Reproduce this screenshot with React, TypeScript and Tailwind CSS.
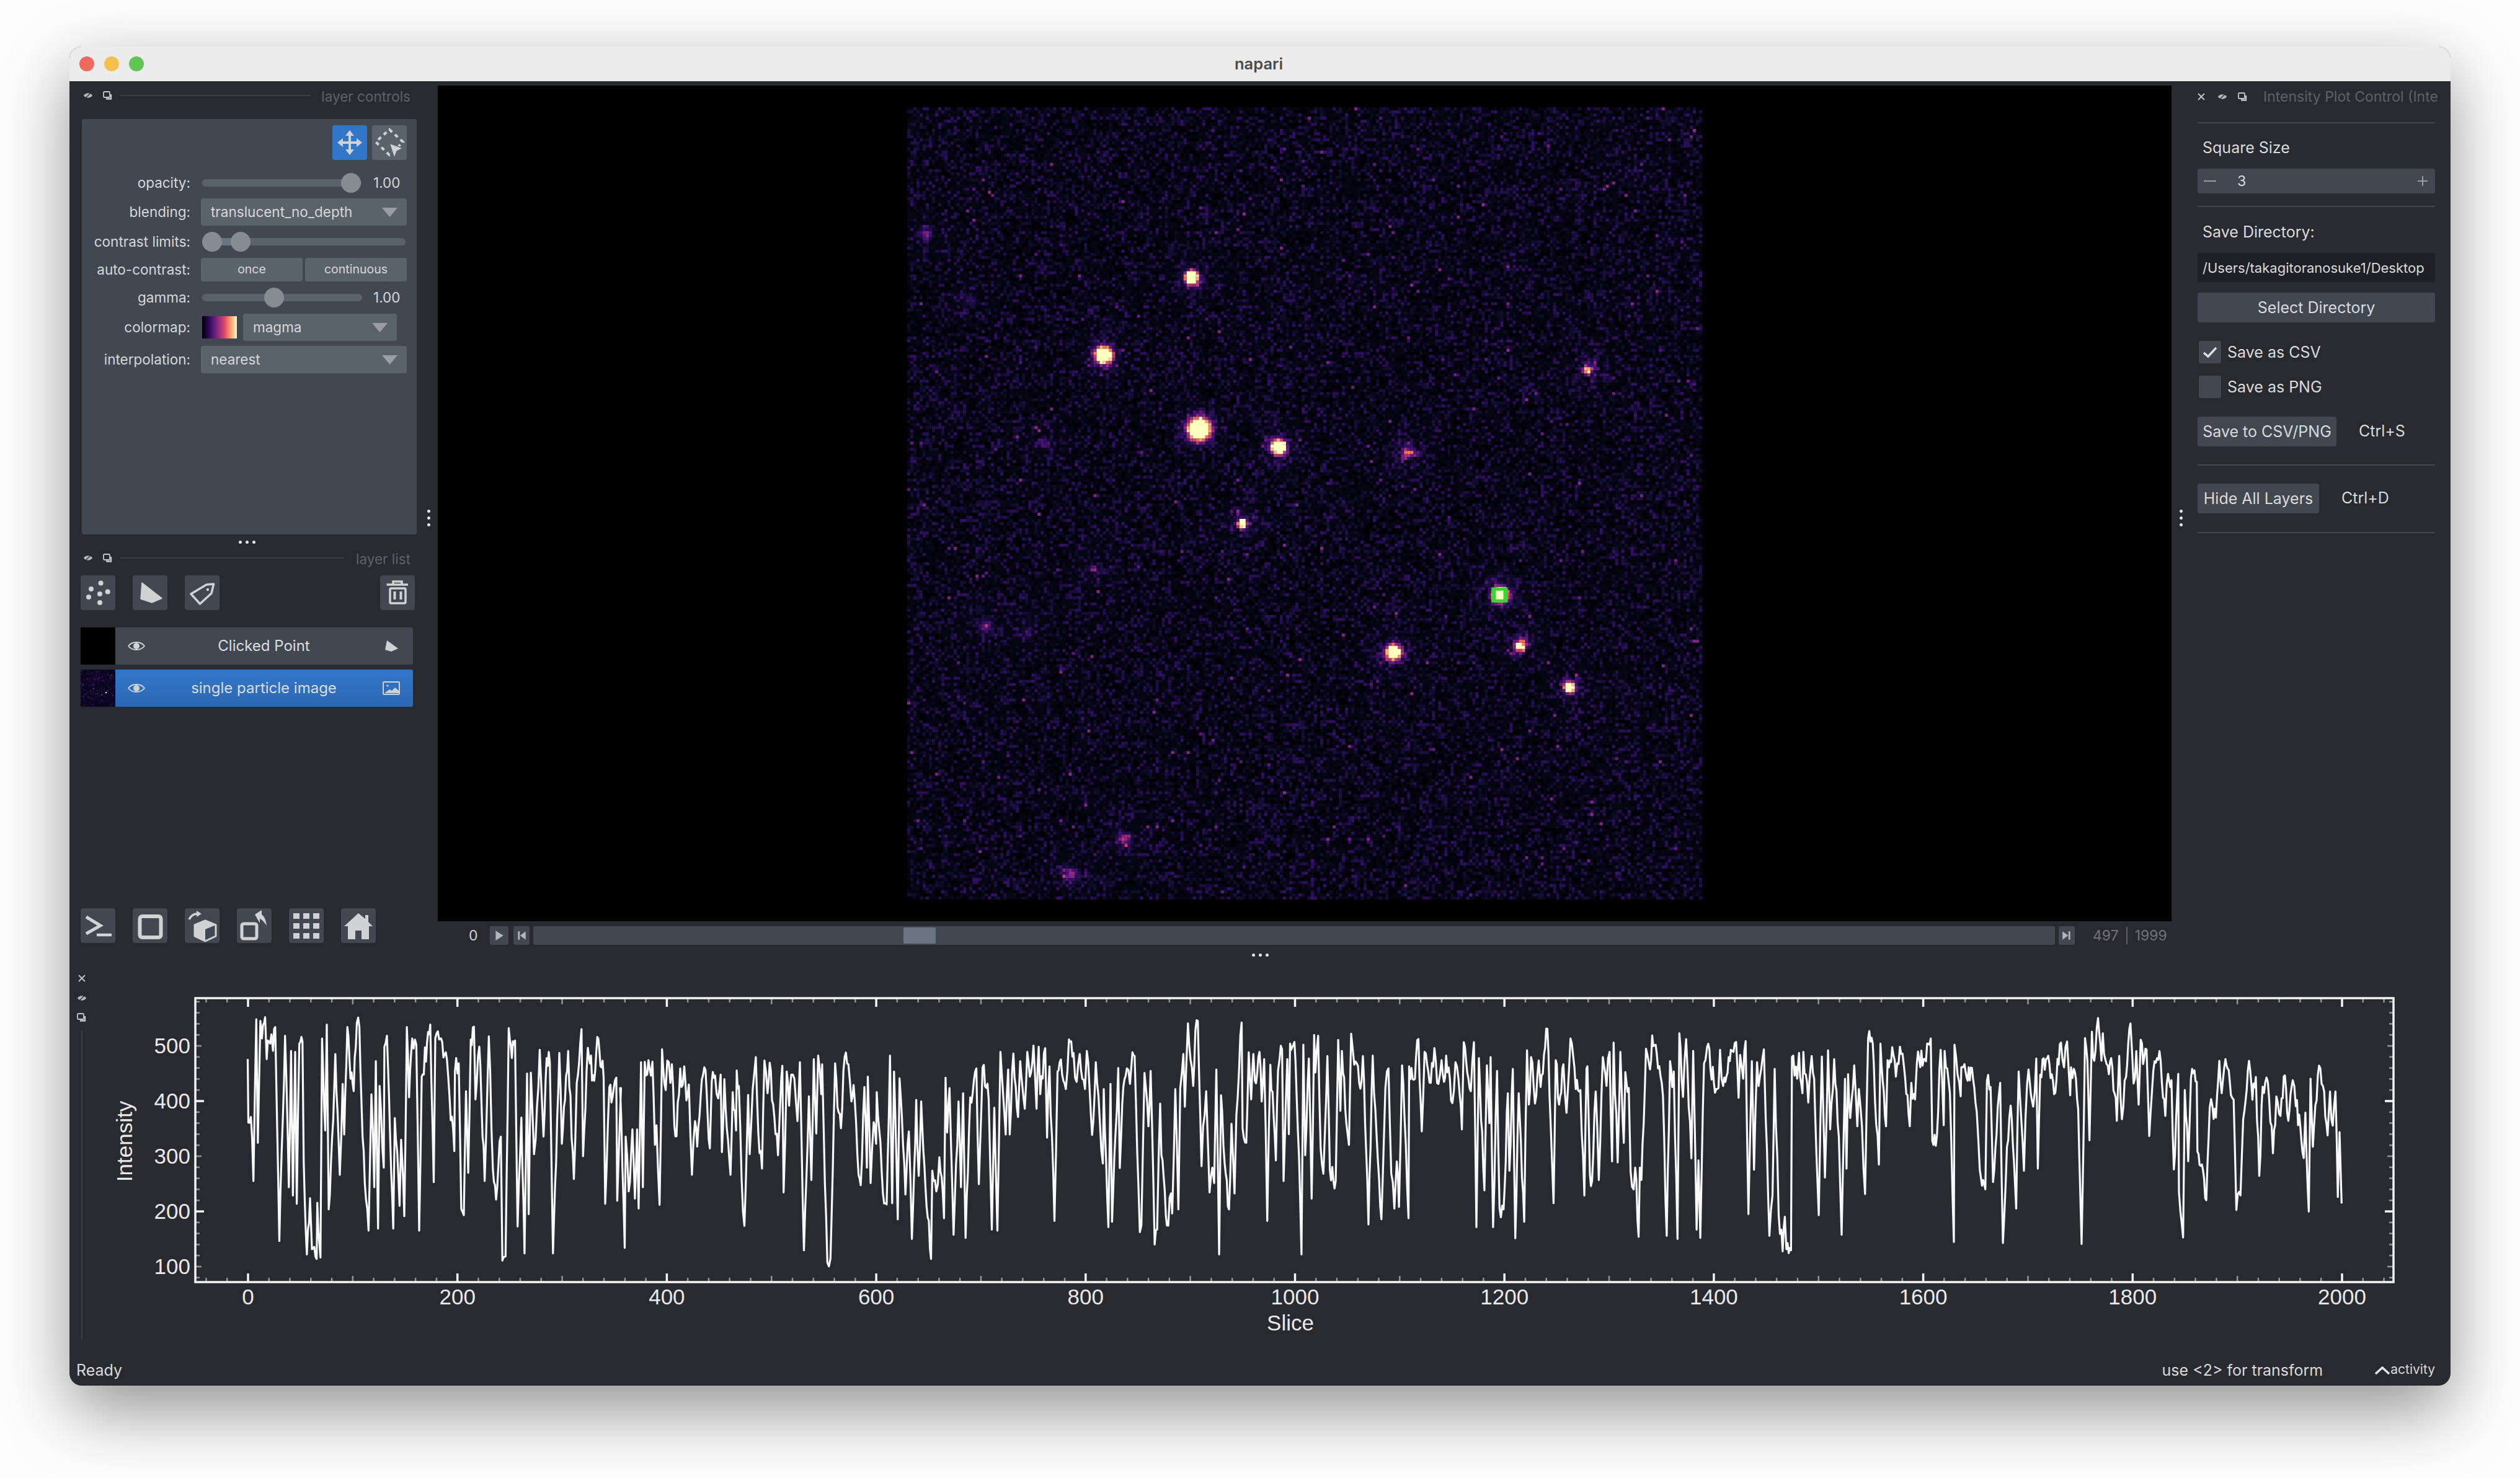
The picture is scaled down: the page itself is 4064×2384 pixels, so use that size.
import type { ReactNode } from "react";

// magma stops, t = index / 10
const magma = [
  [0, 0, 4], [20, 14, 54], [59, 15, 112], [100, 26, 128], [140, 41, 129], [183, 55, 121],
  [222, 73, 104], [247, 112, 92], [254, 159, 109], [254, 207, 146], [252, 253, 191],
];

function magmaAt(v: number) {
  const t = Math.min(Math.max(v, 0), 1) * 10;
  const i = Math.min(Math.floor(t), 9);
  const f = t - i;
  const c = magma[i].map((n, k) => Math.round(n + (magma[i + 1][k] - n) * f));
  return `rgb(${c[0]},${c[1]},${c[2]})`;
}

function rng(seed: number) {
  let s = seed;
  return () => {
    s = (s * 1664525 + 1013904223) >>> 0;
    return (((s >>> 8) ^ s) >>> 0) % 100000 / 100000;
  };
}

// [zoom x, zoom y, core sigma, amp, halo]
const spots = [
  [553, 345, 1.2, 3, 0.2], [382, 496, 1.5, 3, 0.24], [568, 640, 2.0, 3, 0.28], [722, 675, 1.3, 3, 0.22],
  [652, 824, 0.8, 2.4, 0.2], [972, 687, 1.0, 0.62, 0.24], [1322, 526, 0.9, 0.85, 0.22], [1152, 963, 1.4, 3, 0.26],
  [945, 1075, 1.3, 3, 0.22], [1190, 1063, 1.1, 1.2, 0.28], [1287, 1143, 1.0, 2.4, 0.2], [36, 260, 1.1, 0.26, 0.06],
  [122, 388, 1.1, 0.14, 0.04], [265, 667, 1.0, 0.18, 0.04], [363, 913, 0.6, 0.55, 0.08], [153, 1025, 1.3, 0.28, 0.06],
  [422, 1438, 1.2, 0.38, 0.12], [318, 1508, 1.4, 0.32, 0.08], [233, 1035, 1.5, 0.08, 0.03],
];

function buildImage() {
  const r = rng(7321);
  const levels: string[] = Array.from({ length: 41 }, () => "");
  for (let y = 0; y < 256; y++) {
    for (let x = 0; x < 256; x++) {
      const a = r();
      let v = 0.012 + 0.17 * Math.pow(a, 3.4);
      if (r() > 0.996) v = 0.22 + r() * 0.18;
      for (const [zx, zy, sig, amp, halo] of spots) {
        const px = (zx / 1.206 - 3) / 5;
        const py = (zy / 1.206 - 12) / 5 - 0.3;
        const d = (px - x) * (px - x) + (py - y) * (py - y);
        if (d > 120) continue;
        v += amp * Math.exp(-d / (2 * sig * sig));
        v += halo * r() * r() * 2 * Math.exp(-d / (2 * 10 * (sig > 1.2 ? 1.4 : 1)));
      }
      const l = Math.min(40, Math.round(v * 40));
      if (l > 0) levels[l] += `M${x} ${y}h1v1h-1z`;
    }
  }
  return levels;
}

const imageLevels = buildImage();

function ParticleImage() {
  return (
    <svg viewBox="0 0 256 256" preserveAspectRatio="none" className="h-[1278px] w-[1282px] blur-[0.5px]">
      <rect width="256" height="256" fill="#000004" />
      {imageLevels.map((d, i) => (d ? <path key={i} d={d} fill={magmaAt(i / 40)} /> : null))}
      <rect x="188.2" y="155.2" width="5.2" height="4.8" fill="#3ed332" />
      <rect x="189.6" y="156.2" width="2.4" height="2.8" fill="#fbf9c4" />
    </svg>
  );
}

function Thumbnail() {
  const r = rng(91);
  const cells: ReactNode[] = [];
  for (let i = 0; i < 170; i++) {
    cells.push(
      <rect key={i} x={Math.floor(r() * 56)} y={Math.floor(r() * 60)} width="1.4" height="1.4" fill={i % 9 === 0 ? "#8c2981" : "#3b0f70"} />
    );
  }
  return (
    <svg viewBox="0 0 56 60" className="h-[60px] w-[56px] shrink-0">
      <rect width="56" height="60" fill="#0a0620" />
      {cells}
      <rect x="40" y="36" width="2" height="2" fill="#fcfdbf" />
      <rect x="20" y="30" width="1.6" height="1.6" fill="#de4968" />
      <rect x="33" y="40" width="1.6" height="1.6" fill="#de4968" />
    </svg>
  );
}

// traced trace of the intensity curve: [zoom origin, x scale, y origin, y scale, points]
const traced: [number, number, number, number, number[]][] = [
  [300, 1.96, 1600, 3, [195,325,197,632,205,605,213,915,222,132,227,730,235,140,240,225,250,122,255,325,262,240,270,205,275,285,282,170,295,1205,313,212,325,945,332,285,338,985,345,290,350,1025,358,250,368,240,372,820,382,1270,392,998,398,1245,413,1292,415,1020,425,1285,430,225,440,670,445,158,451,1052,462,700,472,300,486,885,495,445,500,690,510,170,520,420,530,480,540,150,548,170,558,700,565,925,577,1155,586,495,595,945,600,335,607,1145,612,455,625,850,627,265,635,212,655,1145,660,610,675,1035,680,715,690,1085,698,170,705,510,715,225,728,255,737,1155,745,410,772,158,783,920,788,225,800,230,806,225,825,330,833,510,848,770,850,385,862,345,870,1050,878,1080,885,480,892,875,900,230,910,168,915,520,927,265,944,915,957,215,970,860,980,1005,995,700,1000,1300,1010,1280,1020,175,1030,320,1040,235,1048,1135,1060,608,1070,1265,1078,395,1083,1075,1090,390,1100,785,1105,715,1118,280,1130,700,1140,320,1150,340,1160,1265,1180,295,1188,735,1208,285,1226,905,1235,440,1250,180,1255,795,1270,270,1290,430,1300,218,1320,415,1325,1025,1338,460,1348,510,1360,415,1363,1010,1375,465]],
  [1000, 2.01, 1620, 3, [0,405,15,1178,18,640,28,905,40,605,48,940,55,605,60,988,68,280,74,885,80,278,88,340,92,270,100,345,105,278,113,680,118,585,128,970,136,217,148,415,153,272,163,380,168,290,176,590,183,638,195,310,203,390,208,300,215,465,223,388,233,825,243,565,250,688,265,365,277,318,291,697,297,375,308,345,318,455,326,340,330,715,338,362,358,825,365,425,376,610,378,320,385,395,394,845,403,1072,415,438,420,725,430,410,435,335,440,255,448,620,460,795,468,272,478,430,485,282,500,545,512,730,526,297,530,910,540,325,548,490,555,340,565,360,575,565,583,280,596,1190,612,445,620,850,628,265,636,625,642,248,652,435,655,290,660,605,672,1250,682,1230,697,285,705,500,716,600,728,255,740,290,750,470,757,390,773,825,780,875,792,400,800,790,803,350,812,865,822,570,830,675,832,425,852,915,864,968,875,248,882,962,888,325,900,1040,906,358,925,920,936,615,946,1135,960,462,968,830,976,470,990,885,1008,1232,1012,805,1025,905,1035,740,1050,1035,1055,355,1060,620,1068,405,1081,1115,1097,470,1105,885,1112,430,1120,1130,1135,450,1155,310,1163,870,1175,305,1195,460,1205,1090,1213,500,1223,1095,1233,230,1250,630,1258,315,1263,630,1275,238,1290,545,1297,275,1312,505,1320,230,1328,350,1340,200,1350,505,1357,205,1362,435,1378,212,1384,645,1392,300,1408,1048,1418,325,1425,280,1445,410,1455,170,1470,235,1480,375,1490,240,1507,410,1513,225,1530,632,1542,280,1555,560,1565,770]],
  [1780, 2.01, 1620, 3, [0,410,15,1078,22,385,27,1052,38,630,47,308,52,792,60,480,75,310,85,385,93,232,100,250,117,1102,122,1070,132,332,145,590,152,322,165,1162,173,1090,183,480,187,730,205,1070,218,915,222,1012,232,410,242,992,248,405,258,240,263,495,273,92,290,395,297,125,305,80,317,783,322,590,332,420,343,910,352,790,358,865,365,315,374,1210,380,440,392,770,406,992,414,578,424,915,430,535,447,88,450,600,462,670,470,232,478,460,485,240,490,370,505,230,512,470,520,265,530,1048,540,292,558,755,565,320,570,265,578,218,583,855,595,265,600,628,604,190,618,182,633,735,641,1210,647,195,653,730,665,262,674,940,682,148,686,330,695,152,703,695,712,820,725,250,733,800,752,855,760,172,767,515,772,225,790,620,795,680,802,142,808,232,820,285,832,408,840,250,858,1065,872,248,885,650,900,1040,913,405,923,310,932,820,942,988,950,760,957,980,967,295,975,550,988,1035,990,300,1005,365,1020,168,1031,615,1040,230,1060,380,1072,212,1085,385,1095,270,1103,375,1110,248,1130,478,1140,280,1150,360,1161,605,1167,183,1190,420,1200,183,1208,1078,1216,260,1234,900,1242,295,1250,575,1254,255,1262,1078,1275,322,1283,985,1296,992,1310,430,1315,805,1326,312,1334,1132,1345,430,1363,1052,1372,222,1378,485,1385,255,1398,480,1410,272,1416,400,1438,118,1445,440,1458,962,1465,270,1476,485,1490,290,1500,525,1513,165,1530,410,1545,415,1558,925,1565,310]],
  [2560, 2.01, 1620, 3, [0,300,8,820,15,855,27,422,37,850,50,255,62,395,72,230,80,760,85,185,98,765,107,230,118,670,123,328,134,405,140,810,150,895,155,790,166,1125,170,790,175,850,190,215,203,315,210,150,225,240,245,445,257,1120,268,275,275,400,280,325,292,1135,298,140,310,448,320,168,337,745,343,225,354,1090,360,755,366,1130,378,285,388,208,410,380,425,405,430,220,440,395,465,220,482,182,490,452,495,245,505,360,513,178,522,1015,533,275,540,800,550,280,555,395,572,218,578,555,590,1120,600,925,607,312,620,1020,633,1195,640,1028,645,1185,660,1190,663,255,680,360,686,235,697,430,700,230,716,475,727,250,735,360,750,1020,760,252,770,838,780,222,787,605,800,265,815,640,824,1115,835,360,840,795,845,338,852,550,865,295,875,590,880,410,890,590,900,918,910,165,925,190,932,460,945,775,950,190,968,590,973,270,992,245,1000,350,1013,205,1030,355,1045,590,1050,380,1062,460,1068,285,1090,265,1105,190,1113,165,1118,660,1133,635,1145,220,1155,585,1158,225,1175,430,1188,1150,1190,195,1200,340,1210,445,1212,305,1250,360,1262,520,1272,800,1290,895,1295,370,1307,400,1315,860,1330,500,1338,380,1347,1155,1360,690,1372,490,1390,988,1398,325,1415,805,1425,390,1430,315,1445,495,1455,262,1460,795,1468,340,1490,262,1513,435,1535,185,1545,305,1555,180,1565,440]],
  [3200, 1.815, 1460, 1.912, [254,500,262,505,275,630,285,1045,295,410,302,480,308,725,315,390,322,480,333,348,343,480,347,395,358,490,375,500,388,665,395,465,403,660,415,530,428,365,437,550,445,450,452,615,458,415,465,490,475,445,483,712,495,510,513,450,530,650,538,520,548,540,555,815,568,520,570,885,582,1025,587,570,597,790,605,535,622,545,624,760,640,815,650,910,660,625,668,620,678,655,688,480,695,580,706,475,722,585,730,600,738,940,750,895,758,660,775,480,785,600,795,530,805,835,815,560,830,545,845,765,855,590,867,650,880,525,890,665,903,540,912,620,925,680,935,780,940,640,950,945,955,535,962,745,980,495,995,575,1005,710,1012,575,1020,680,1028,575,1035,900,1040,700,1046,920]],
];

function tracePoints() {
  const r = rng(4242);
  const out: string[] = [];
  let prev: [number, number] | null = null;
  for (const [x0, sx, y0, sy, pts] of traced) {
    for (let i = 0; i < pts.length; i += 2) {
      const x = x0 + pts[i] / sx;
      const y = y0 + pts[i + 1] / sy;
      if (prev) {
        // the source has a sample every 1.7px, fill the gaps with some chatter
        const steps = Math.floor((x - prev[0]) / 1.7);
        for (let k = 1; k < steps; k++) {
          const f = k / steps;
          const my = prev[1] + (y - prev[1]) * f + (r() - 0.5) * 36;
          out.push(`${(prev[0] + (x - prev[0]) * f).toFixed(1)},${my.toFixed(1)}`);
        }
      }
      out.push(`${x.toFixed(1)},${y.toFixed(1)}`);
      prev = [x, y];
    }
  }
  return out.join(" ");
}

const sx = (s: number) => 400 + 1.6885 * s;
const vy = (v: number) => 1776 - 0.89 * (v - 400);
const xMinor = Array.from({ length: 105 }, (_, i) => -40 + i * 20).filter((s) => sx(s) < 3856);
const yMinor = Array.from({ length: 26 }, (_, i) => 80 + i * 20);
const tickText = "fill-[#e9e9ea] text-[35px] [font-family:'Liberation_Sans',Arial,sans-serif]";

function IntensityPlot() {
  return (
    <svg viewBox="152 1550 3800 640" className="h-[640px] w-[3800px]">
      {xMinor.map((s) => {
        const major = s % 200 === 0;
        const mid = s % 100 === 0;
        const len = major ? 14 : mid ? 10 : 7;
        const stroke = major ? "#f4f4f4" : "#8f9195";
        const w = major ? 3.5 : 2.6;
        return (
          <g key={s} stroke={stroke} strokeWidth={w}>
            <line x1={sx(s)} x2={sx(s)} y1={1610} y2={1610 + len} />
            <line x1={sx(s)} x2={sx(s)} y1={2068} y2={2068 - len} />
          </g>
        );
      })}
      {yMinor.map((v) => {
        const major = v % 200 === 0;
        const mid = v % 100 === 0;
        const len = major ? 14 : mid ? 10 : 7;
        const stroke = major ? "#f4f4f4" : "#8f9195";
        const w = major ? 3.5 : 2.6;
        return (
          <g key={v} stroke={stroke} strokeWidth={w}>
            <line x1={315} x2={315 + len} y1={vy(v)} y2={vy(v)} />
            <line x1={3860} x2={3860 - len} y1={vy(v)} y2={vy(v)} />
          </g>
        );
      })}
      <rect x="315" y="1610" width="3545" height="458" fill="none" stroke="#f4f4f4" strokeWidth="3.5" />
      <polyline points={tracePoints()} fill="none" stroke="#f9f9f9" strokeWidth="3.2" strokeLinejoin="round" />
      {[0, 200, 400, 600, 800, 1000, 1200, 1400, 1600, 1800, 2000].map((s) => (
        <text key={s} x={sx(s)} y={2104} textAnchor="middle" className={tickText}>{s}</text>
      ))}
      {[100, 200, 300, 400, 500].map((v) => (
        <text key={v} x={307} y={vy(v) + 12} textAnchor="end" className={tickText}>{v}</text>
      ))}
      <text x={2081} y={2146} textAnchor="middle" className={tickText}>Slice</text>
      <text x={213} y={1841} textAnchor="middle" transform="rotate(-90 213 1841)" className={tickText}>Intensity</text>
    </svg>
  );
}

const icon = "#d1d2d4";

function MoveIcon() {
  return (
    <svg viewBox="0 0 56 56" className="size-full">
      <g fill={icon}>
        <rect x="26" y="14" width="4" height="28" />
        <rect x="14" y="26" width="28" height="4" />
        <path d="M28 8l7 9H21zM28 48l7-9H21zM8 28l9-7v14zM48 28l-9-7v14z" />
      </g>
    </svg>
  );
}

function SelectIcon() {
  return (
    <svg viewBox="0 0 56 56" className="size-full">
      <path d="M28 7L50 27 28 48 6 27Z" fill="none" stroke={icon} strokeWidth="4" strokeDasharray="6 6" />
      <path d="M28 29L50 37 40 42 36 53Z" fill={icon} stroke="#5a626c" strokeWidth="1.5" />
    </svg>
  );
}

function PointsIcon() {
  return (
    <svg viewBox="0 0 56 56" className="size-full">
      <g fill={icon}>
        <circle cx="32.6" cy="12.4" r="4" />
        <circle cx="17" cy="22" r="4" />
        <circle cx="43.7" cy="26.6" r="4" />
        <circle cx="31" cy="30" r="4" />
        <circle cx="13" cy="35" r="4" />
        <circle cx="31" cy="44" r="4" />
      </g>
    </svg>
  );
}

function ShapesIcon() {
  return (
    <svg viewBox="0 0 56 56" className="size-full">
      <path d="M15 12L47 37 31 44 13 38Z" fill={icon} stroke={icon} strokeWidth="1.5" strokeLinejoin="round" />
    </svg>
  );
}

function LabelsIcon() {
  return (
    <svg viewBox="0 0 56 56" className="size-full">
      <path d="M10 30L35 15 46.5 14 43 29 24.5 46Z" fill="none" stroke={icon} strokeWidth="3.5" strokeLinejoin="round" />
      <circle cx="37" cy="23" r="2.2" fill={icon} />
    </svg>
  );
}

function DeleteIcon() {
  return (
    <svg viewBox="0 0 56 56" className="size-full">
      <g fill="none" stroke={icon} strokeWidth="3.5">
        <path d="M10.5 15H45M21 15V10H35V15" />
        <rect x="16" y="21" width="25" height="24" rx="2" />
      </g>
      <rect x="21.5" y="26" width="4" height="13" fill={icon} />
      <rect x="31.5" y="26" width="4" height="13" fill={icon} />
    </svg>
  );
}

function ConsoleIcon() {
  return (
    <svg viewBox="0 0 56 56" className="size-full">
      <path d="M9 14L32 28 9 41" fill="none" stroke={icon} strokeWidth="5" />
      <path d="M26 43H50" stroke={icon} strokeWidth="4.5" />
    </svg>
  );
}

function SquareIcon() {
  return (
    <svg viewBox="0 0 56 56" className="size-full">
      <rect x="11.5" y="13" width="34" height="34" rx="4" fill="none" stroke={icon} strokeWidth="6" />
    </svg>
  );
}

function RollIcon() {
  return (
    <svg viewBox="0 0 56 56" className="size-full">
      <path d="M33 20L50 27 50 45 33 53 16 45 16 27Z" fill="none" stroke={icon} strokeWidth="3" strokeLinejoin="round" />
      <path d="M33 20L50 27 33 34 16 27Z M16 27L33 34 33 53 16 45Z" fill={icon} />
      <path d="M7 18C10 12 14 9 20 9" fill="none" stroke={icon} strokeWidth="3.5" />
      <path d="M19 4L27 9 19 14Z" fill={icon} />
    </svg>
  );
}

function TransposeIcon() {
  return (
    <svg viewBox="0 0 56 56" className="size-full">
      <rect x="8" y="25" width="24" height="24" rx="3" fill="none" stroke={icon} strokeWidth="5" />
      <path d="M29 10L40 3 40 10C45 14 47 20 48 28 43 21 40 18 37 17L37 24Z" fill={icon} />
    </svg>
  );
}

function GridIcon() {
  const at = [7, 23, 39];
  return (
    <svg viewBox="0 0 56 56" className="size-full">
      {at.map((y) => at.map((x) => <rect key={`${x}-${y}`} x={x} y={y + 1} width="10" height="9" fill={icon} />))}
    </svg>
  );
}

function HomeIcon() {
  return (
    <svg viewBox="0 0 56 56" className="size-full">
      <path d="M28 8L39 17V11H44V22L51 29H45V50H33V36H23V50H11V29H5Z" fill={icon} />
    </svg>
  );
}

function EyeIcon() {
  return (
    <svg viewBox="0 0 28 18" className="h-[18px] w-[28px]">
      <path d="M1 9C7 1 21 1 27 9 21 17 7 17 1 9Z" fill="none" stroke="#d1d2d4" strokeWidth="1.8" />
      <circle cx="14" cy="9" r="5" fill="#d1d2d4" />
    </svg>
  );
}

function ImageGlyph() {
  return (
    <svg viewBox="0 0 28 22" className="h-[22px] w-[28px]">
      <rect x="1" y="1" width="26" height="20" rx="1.5" fill="none" stroke="#d1d2d4" strokeWidth="2" />
      <circle cx="8" cy="7" r="1.6" fill="#d1d2d4" />
      <path d="M3 19L11 13 15 15 20 10 26 15V19Z" fill="#d1d2d4" />
    </svg>
  );
}

function ShapeGlyph() {
  return (
    <svg viewBox="0 0 24 22" className="h-[22px] w-[24px]">
      <path d="M5 2L23 15 12 20 2 17Z" fill="#d1d2d4" />
    </svg>
  );
}

function HideGlyph({ className = "" }: { className?: string }) {
  return (
    <svg viewBox="0 0 16 12" className={`h-[12px] w-[16px] shrink-0 ${className}`}>
      <path d="M1 6C4 1 12 1 15 6 12 11 4 11 1 6Z" fill="#b4b6ba" />
      <path d="M3 11L13 1" stroke="#282a30" strokeWidth="1.2" />
    </svg>
  );
}

function FloatGlyph({ className = "" }: { className?: string }) {
  return (
    <svg viewBox="0 0 16 15" className={`h-[15px] w-[16px] shrink-0 ${className}`}>
      <rect x="1" y="1" width="10" height="9" rx="1.5" fill="none" stroke="#c4c6c9" strokeWidth="1.8" />
      <path d="M13 5V12.5H5" fill="none" stroke="#c4c6c9" strokeWidth="2.4" />
    </svg>
  );
}

function CloseGlyph() {
  return (
    <svg viewBox="0 0 12 12" className="size-[12px] shrink-0">
      <path d="M1 1L11 11M11 1L1 11" stroke="#c4c6c9" strokeWidth="1.8" />
    </svg>
  );
}

function Dots({ vertical = false }: { vertical?: boolean }) {
  return (
    <div className={`flex gap-[6px] ${vertical ? "flex-col" : "flex-row"}`}>
      <span className="size-[5px] rounded-full bg-[#e4e5e7]" />
      <span className="size-[5px] rounded-full bg-[#e4e5e7]" />
      <span className="size-[5px] rounded-full bg-[#e4e5e7]" />
    </div>
  );
}

function IconButton({ children, className = "" }: { children: ReactNode; className?: string }) {
  return <div className={`size-[56px] shrink-0 rounded-[4px] bg-[#414851] ${className}`}>{children}</div>;
}

function Arrow() {
  return (
    <svg viewBox="0 0 25 15" className="h-[15px] w-[25px]">
      <path d="M0 0H25L12.5 15Z" fill="#9a9ea4" />
    </svg>
  );
}

function Combo({ value, className }: { value: string; className: string }) {
  return (
    <div className={`flex h-[44px] items-center justify-between rounded-[4px] bg-[#5a626c] pl-[16px] pr-[15px] ${className}`}>
      <span>{value}</span>
      <Arrow />
    </div>
  );
}

function Row({ label, className, children }: { label: string; className: string; children: ReactNode }) {
  return (
    <div className={`flex items-center ${className}`}>
      <div className="w-[175px] shrink-0 whitespace-nowrap text-right">{label}</div>
      <div className="ml-[17px] flex items-center">{children}</div>
    </div>
  );
}

function Thumb({ className }: { className: string }) {
  return <span className={`absolute top-[-10px] size-[32px] rounded-full bg-[#858c92] ${className}`} />;
}

function LayerControls() {
  return (
    <div className="ml-[20px] mt-[16px] h-[670px] w-[540px] rounded-[3px] bg-[#414851] text-[22.5px] text-[#d6d7d9]">
      <div className="flex justify-end gap-[8px] pr-[16px] pt-[10px]">
        <div className="size-[56px] rounded-[4px] bg-[#3176c8]"><MoveIcon /></div>
        <div className="size-[56px] rounded-[4px] bg-[#5a626c]"><SelectIcon /></div>
      </div>
      <Row label="opacity:" className="mt-[17px] h-[40px]">
        <div className="relative ml-[2px] h-[12px] w-[257px] rounded-full bg-[#5a626c]">
          <Thumb className="left-[224px]" />
        </div>
        <span className="ml-[19px]">1.00</span>
      </Row>
      <Row label="blending:" className="mt-[5px] h-[44px]">
        <Combo value="translucent_no_depth" className="w-[332px]" />
      </Row>
      <Row label="contrast limits:" className="mt-[6px] h-[40px]">
        <div className="relative ml-[2px] h-[12px] w-[328px] rounded-full bg-[#5a626c]">
          <span className="absolute left-[16px] h-[12px] w-[46px] bg-[#6a7380]" />
          <Thumb className="left-0" />
          <Thumb className="left-[46px]" />
        </div>
      </Row>
      <Row label="auto-contrast:" className="mt-[6px] h-[38px]">
        <div className="flex gap-[4px] text-[19.5px]">
          <div className="flex h-[38px] w-[164px] items-center justify-center rounded-[3px] bg-[#5a626c]">once</div>
          <div className="flex h-[38px] w-[164px] items-center justify-center rounded-[3px] bg-[#5a626c]">continuous</div>
        </div>
      </Row>
      <Row label="gamma:" className="mt-[6px] h-[40px]">
        <div className="relative ml-[2px] h-[12px] w-[258px] rounded-full bg-[#5a626c]">
          <Thumb className="left-[100px]" />
        </div>
        <span className="ml-[18px]">1.00</span>
      </Row>
      <Row label="colormap:" className="mt-[6px] h-[44px]">
        <div className="ml-[2px] h-[36px] w-[56px] bg-[linear-gradient(90deg,#000004,#3b0f70_25%,#8c2981_45%,#de4968_65%,#fe9f6d_82%,#fcfdbf)]" />
        <Combo value="magma" className="ml-[10px] w-[248px]" />
      </Row>
      <Row label="interpolation:" className="mt-[8px] h-[44px]">
        <Combo value="nearest" className="w-[332px]" />
      </Row>
    </div>
  );
}

function DockTitle({ title, lineWidth }: { title: string; lineWidth: string }) {
  return (
    <div className="flex h-full items-center pl-[22px] pr-[10px]">
      <HideGlyph />
      <FloatGlyph className="ml-[16px]" />
      <div className={`ml-[12px] h-[2px] shrink-0 bg-[#3c4149] ${lineWidth}`} />
      <div className="ml-auto translate-y-[2px] whitespace-nowrap text-[22.5px] text-[#5a626c]">{title}</div>
    </div>
  );
}

function LayerRow({ name, active = false, glyph, thumb }: { name: string; active?: boolean; glyph: ReactNode; thumb: ReactNode }) {
  return (
    <div className="flex h-[60px]">
      {thumb}
      <div className={`flex w-[480px] items-center rounded-r-[3px] pl-[20px] pr-[21px] text-[24px] text-[#dcdde0] ${active ? "bg-[linear-gradient(180deg,#3376c9,#2a68b2)]" : "bg-[#414851]"}`}>
        <EyeIcon />
        <div className="flex-1 text-center">{name}</div>
        <div className="flex w-[28px] justify-center">{glyph}</div>
      </div>
    </div>
  );
}

function LeftDock() {
  return (
    <div className="flex h-full w-[560px] shrink-0 flex-col">
      <div className="h-[44px] shrink-0"><DockTitle title="layer controls" lineWidth="w-[307px]" /></div>
      <LayerControls />
      <div className="flex h-[24px] shrink-0 items-center justify-center pl-[12px]"><Dots /></div>
      <div className="h-[28px] shrink-0"><DockTitle title="layer list" lineWidth="w-[361px]" /></div>
      <div className="ml-[18px] mt-[14px] flex w-[539px]">
        <IconButton><PointsIcon /></IconButton>
        <IconButton className="ml-[28px]"><ShapesIcon /></IconButton>
        <IconButton className="ml-[28px]"><LabelsIcon /></IconButton>
        <IconButton className="ml-auto"><DeleteIcon /></IconButton>
      </div>
      <div className="ml-[18px] mt-[28px] flex flex-col gap-[8px]">
        <LayerRow name="Clicked Point" glyph={<ShapeGlyph />} thumb={<div className="h-[60px] w-[56px] shrink-0 bg-black" />} />
        <LayerRow name="single particle image" active glyph={<ImageGlyph />} thumb={<Thumbnail />} />
      </div>
      <div className="ml-[18px] mt-auto mb-[9px] flex gap-[28px]">
        <IconButton><ConsoleIcon /></IconButton>
        <IconButton><SquareIcon /></IconButton>
        <IconButton><RollIcon /></IconButton>
        <IconButton><TransposeIcon /></IconButton>
        <IconButton><GridIcon /></IconButton>
        <IconButton><HomeIcon /></IconButton>
      </div>
    </div>
  );
}

function StepButton({ d, className }: { d: string; className: string }) {
  return (
    <div className={`flex h-[30px] items-center justify-center rounded-[3px] bg-[#414851] ${className}`}>
      <svg viewBox="0 0 16 16" className="size-[18px]">
        <path d={d} fill="#b4b6ba" />
      </svg>
    </div>
  );
}

function Viewer() {
  return (
    <div className="flex w-[2796px] shrink-0 flex-col pt-[6px]">
      <div className="flex h-[1348px] items-center justify-center bg-black">
        <ParticleImage />
      </div>
      <div className="mt-[8px] flex h-[30px] items-center text-[23px] text-[#a4a7ab]">
        <span className="ml-[50px] w-[14px] text-center text-[#d0d1d4]">0</span>
        <StepButton d="M3 1L14 8 3 15Z" className="ml-[20px] w-[30px]" />
        <StepButton d="M3 2H5.5V14H3ZM14 2V14L6 8Z" className="ml-[8px] w-[26px]" />
        <div className="relative ml-[6px] h-[30px] w-[2454px] rounded-[3px] bg-[#414851]">
          <span className="absolute left-[597px] top-[2px] h-[26px] w-[52px] rounded-[2px] bg-[#6a7380]" />
        </div>
        <StepButton d="M13 2H10.5V14H13ZM2 2V14L10 8Z" className="ml-[6px] w-[26px]" />
        <span className="ml-[29px] text-[#6f747a]">497</span>
        <span className="ml-[12px] h-[28px] w-[2px] bg-[#5a626c]" />
        <span className="ml-[12px] text-[#6f747a]">1999</span>
      </div>
    </div>
  );
}

function Divider({ className }: { className: string }) {
  return <div className={`h-[2px] bg-[#414851] ${className}`} />;
}

function PlainButton({ label, className = "" }: { label: string; className?: string }) {
  return <div className={`flex h-[48px] items-center justify-center whitespace-nowrap rounded-[3px] bg-[#414851] pt-[2px] ${className}`}>{label}</div>;
}

function CheckRow({ label, checked = false, className }: { label: string; checked?: boolean; className: string }) {
  return (
    <div className={`flex h-[36px] items-center ${className}`}>
      <div className="ml-[2px] flex size-[36px] items-center justify-center rounded-[3px] bg-[#414851]">
        {checked && (
          <svg viewBox="0 0 24 18" className="h-[18px] w-[24px]">
            <path d="M2 10L9 16 22 2" fill="none" stroke="#dcdde0" strokeWidth="3.6" />
          </svg>
        )}
      </div>
      <span className="ml-[10px] translate-y-[1px]">{label}</span>
    </div>
  );
}

function RightDock() {
  return (
    <div className="w-[420px] shrink-0 pl-[12px] pr-[20px] text-[25px] text-[#d9dadc]">
      <div className="flex h-[44px] translate-y-[2px] items-center overflow-hidden">
        <CloseGlyph />
        <HideGlyph className="ml-[20px]" />
        <FloatGlyph className="ml-[17px]" />
        <span className="ml-[25px] whitespace-nowrap text-[23px] text-[#5a626c]">Intensity Plot Control (Inter</span>
      </div>
      <div className="pr-[5px]">
        <Divider className="mt-[21px]" />
        <div className="mt-[25px] flex h-[30px] items-center pl-[8px]">Square Size</div>
        <div className="mt-[18px] flex h-[40px] items-center rounded-[3px] bg-[#414851] pl-[10px] pr-[12px]">
          <span className="h-[2px] w-[20px] bg-[#9a9ea4]" />
          <span className="ml-[34px] text-[23px]">3</span>
          <span className="relative ml-auto size-[16px]">
            <span className="absolute left-0 top-[7px] h-[2px] w-[16px] bg-[#9a9ea4]" />
            <span className="absolute left-[7px] top-0 h-[16px] w-[2px] bg-[#9a9ea4]" />
          </span>
        </div>
        <Divider className="mt-[20px]" />
        <div className="mt-[26px] flex h-[30px] items-center pl-[8px]">Save Directory:</div>
        <div className="mt-[18px] flex h-[47px] items-center overflow-hidden whitespace-nowrap rounded-[3px] bg-[#1e2025] pl-[8px] pt-[2px] text-[22px]">/Users/takagitoranosuke1/Desktop</div>
        <PlainButton label="Select Directory" className="mt-[17px]" />
        <CheckRow label="Save as CSV" checked className="mt-[30px]" />
        <CheckRow label="Save as PNG" className="mt-[20px]" />
        <div className="mt-[30px] flex items-center">
          <PlainButton label="Save to CSV/PNG" className="w-[224px]" />
          <span className="ml-[36px]">Ctrl+S</span>
        </div>
        <Divider className="mt-[29px]" />
        <div className="mt-[29px] flex items-center">
          <PlainButton label="Hide All Layers" className="w-[196px]" />
          <span className="ml-[36px]">Ctrl+D</span>
        </div>
        <Divider className="mt-[30px]" />
      </div>
    </div>
  );
}

export default function App() {
  return (
    <div className="h-[2384px] w-[4064px] overflow-hidden bg-[#fdfdfd] pl-[112px] pt-[75px] [font-family:Inter,sans-serif]">
      <div className="flex h-[2160px] w-[3840px] flex-col overflow-hidden rounded-[20px] bg-[#282a30] shadow-[0_40px_110px_rgba(0,0,0,0.42)]">
        <div className="flex h-[57px] shrink-0 items-center border-b border-[#2a2b2e] bg-[#ececec] pl-[16px]">
          <span className="size-[24px] rounded-full bg-[#ec6a5e]" />
          <span className="ml-[16px] size-[24px] rounded-full bg-[#f4bf4f]" />
          <span className="ml-[16px] size-[24px] rounded-full bg-[#61c554]" />
          <span className="ml-[1759px] text-[25.5px] font-semibold text-[#4c4c4c]">napari</span>
        </div>
        <div className="flex h-[1398px] shrink-0">
          <LeftDock />
          <div className="flex w-[34px] shrink-0 items-center pl-[17px] pt-[8px]"><Dots vertical /></div>
          <Viewer />
          <div className="flex w-[30px] shrink-0 items-center justify-center pt-[8px]"><Dots vertical /></div>
          <RightDock />
        </div>
        <div className="flex h-[20px] shrink-0 items-center justify-center"><Dots /></div>
        <div className="flex h-[640px] shrink-0">
          <div className="flex w-[40px] shrink-0 flex-col items-center pt-[22px]">
            <CloseGlyph />
            <HideGlyph className="mt-[20px]" />
            <FloatGlyph className="mt-[18px]" />
            <div className="mt-[13px] h-[498px] w-[2px] bg-[#3c4149]" />
          </div>
          <IntensityPlot />
        </div>
        <div className="flex h-[45px] shrink-0 items-center pb-[4px] pl-[11px] pr-[25px] text-[25px] text-[#d9dadc]">
          <span>Ready</span>
          <span className="ml-auto">use &lt;2&gt; for transform</span>
          <svg viewBox="0 0 26 14" className="ml-[83px] h-[14px] w-[26px]">
            <path d="M2 12L13 2 24 12" fill="none" stroke="#e4e5e7" strokeWidth="3.6" />
          </svg>
          <span className="-translate-y-[2px] text-[21px]">activity</span>
        </div>
      </div>
    </div>
  );
}
